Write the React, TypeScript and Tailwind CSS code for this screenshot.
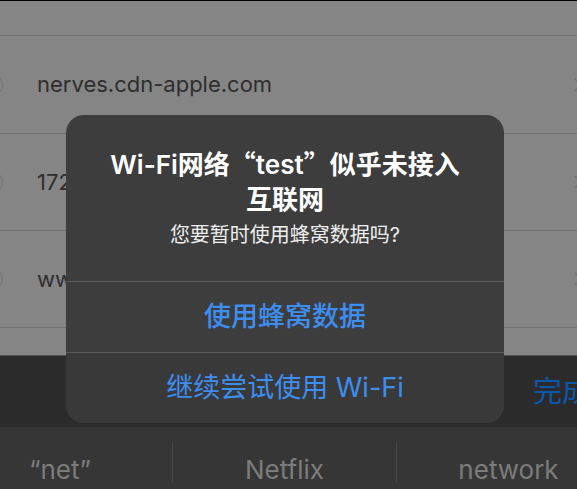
import React from "react";

const rows = ["nerves.cdn-apple.com", "172.16.58.3", "www.apple.com"];
const suggestions = ["“net”", "Netflix", "network"];

function Row({ text, tall }: { text: string; tall?: boolean }) {
  return (
    <div
      className={`relative flex items-center border-t border-[#717171] ${
        tall ? "h-[98px]" : "h-[97px]"
      }`}
    >
      <div className="ml-[-19px] h-[22px] w-[22px] shrink-0 rounded-full border-[1.5px] border-[#727272]"></div>
      <span className="ml-[34px] text-[22px] text-[#2e2e2e]">{text}</span>
      <svg
        viewBox="0 0 8 14"
        className="ml-auto mr-[-5px] h-[14px] w-[8px]"
        fill="none"
        stroke="#727272"
        strokeWidth={1.5}
      >
        <path d="M1 1l6 6-6 6" />
      </svg>
    </div>
  );
}

export default function App() {
  return (
    <div className="relative h-[489px] w-[577px] overflow-hidden bg-[#858585] font-[Inter,'Noto_Sans_CJK_SC',sans-serif]">
      <div className="h-[1px] bg-black"></div>
      <div className="h-[34px]"></div>

      {rows.map((r, i) => (
        <Row key={r} text={r} tall={i === 0} />
      ))}
      <div className="h-[28px] border-t border-[#717171]"></div>

      {/* keyboard toolbar */}
      <div className="flex h-[72px] items-center justify-end border-t border-[#555] bg-[#2b2b2b]">
        <span className="mr-[-14px] text-[29px] text-[#0a58ad]">完成</span>
      </div>

      {/* suggestions */}
      <div className="flex h-[62px] ml-[-52px] bg-[#363636]">
        {suggestions.map((s, i) => (
          <div key={s} className="flex w-[224px] shrink-0">
            {i > 0 && <div className="mt-[16px] h-[40px] w-[1px] bg-[#474747]"></div>}
            <div className="flex flex-1 items-center justify-center pt-[24px] text-[26px] leading-none text-[#7c7c7c]">
              {s}
            </div>
          </div>
        ))}
      </div>

      {/* alert */}
      <div className="absolute left-[66px] top-[115px] w-[438px] h-[308px] overflow-hidden rounded-[18px] bg-[#3d3d3d]">
        <div className="flex h-[166px] flex-col items-center pt-[30px] text-center">
          <div className="text-[26px] font-semibold leading-[35px] text-white">
            Wi-Fi网络<span className="font-['Noto_Sans_CJK_SC']">“</span>test<span className="font-['Noto_Sans_CJK_SC']">”</span>似乎未接入
            <br />
            互联网
          </div>
          <div className="mt-[5px] text-[20px] leading-[26px] text-[#efefef]">
            您要暂时使用蜂窝数据吗?
          </div>
        </div>
        <div className="flex h-[71px] items-center justify-center border-t border-[#5b5b5b] text-[27px] font-medium text-[#3d8ef0]">
          使用蜂窝数据
        </div>
        <div className="flex h-[71px] items-center justify-center border-t border-[#5b5b5b] bg-[#393939] text-[27px] text-[#3d8ef0]">
          继续尝试使用 Wi-Fi
        </div>
      </div>
    </div>
  );
}
